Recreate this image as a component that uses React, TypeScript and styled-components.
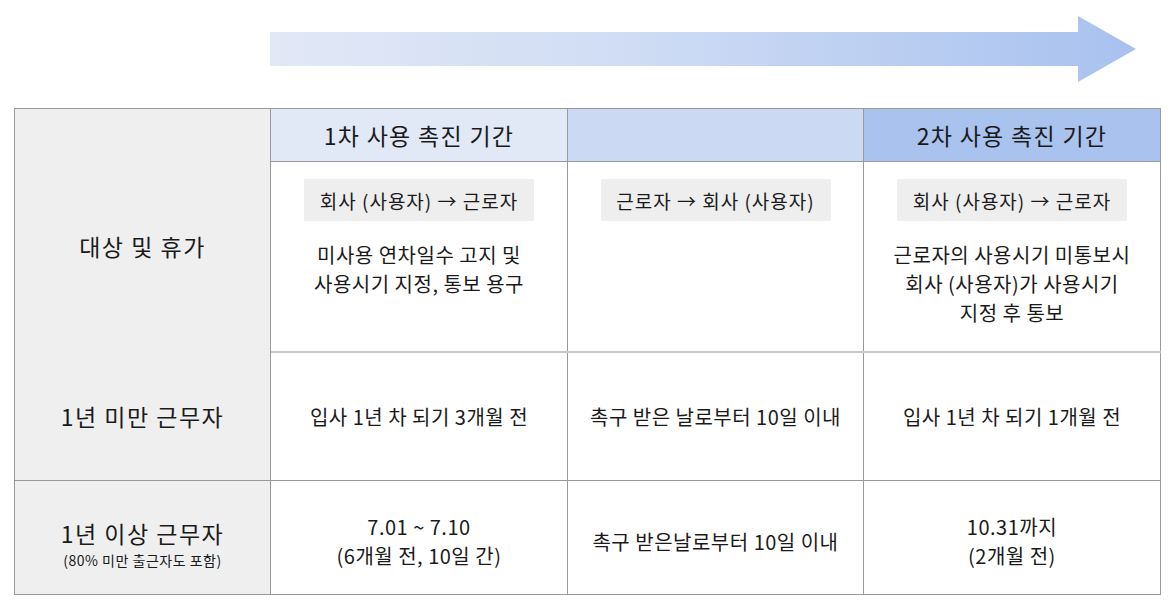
import styled, { createGlobalStyle } from "styled-components";

const GlobalStyle = createGlobalStyle`
  html, body {
    margin: 0;
    padding: 0;
    background: #ffffff;
  }
  body {
    font-family: "Noto Sans CJK KR", "Noto Sans", sans-serif;
    color: #1a1a1a;
  }
`;

const Page = styled.div`
  width: 1173px;
  height: 609px;
  padding-left: 14px;
  box-sizing: border-box;
`;

const ArrowRow = styled.div`
  height: 108px;
  padding-top: 15px;
  padding-left: 256px;
  box-sizing: border-box;
`;

const Table = styled.div`
  display: grid;
  grid-template-columns: 256px 297px 296px 297px;
  grid-template-rows: 53px 189px 2px 128px 114px;
  width: 1147px;
  border-top: 1px solid #9a9a9a;
  border-left: 1px solid #9a9a9a;
  box-sizing: border-box;
`;

const Cell = styled.div<{ $bg?: string }>`
  display: flex;
  flex-direction: column;
  align-items: center;
  justify-content: center;
  text-align: center;
  border-right: 1px solid #9a9a9a;
  border-bottom: 1px solid #9a9a9a;
  background: ${(p) => p.$bg || "#ffffff"};
  box-sizing: border-box;
  font-size: 20px;
  font-weight: 400;
  line-height: 29px;
  letter-spacing: 0.5px;
  white-space: nowrap;
`;

const LabelCell = styled(Cell)<{ $top?: number }>`
  background: #efefef;
  font-size: 23px;
  letter-spacing: 1.5px;
  padding-top: ${(p) => p.$top || 0}px;
`;

const SpanLabel = styled(LabelCell)`
  grid-row: 1 / span 3;
  border-bottom: none;
`;

const HeadCell = styled(Cell)`
  font-size: 23px;
  letter-spacing: 1.3px;
`;

const Divider = styled.div`
  grid-column: 2 / span 3;
  background: #c9c9c9;
`;

const TopCell = styled(Cell)`
  justify-content: flex-start;
  padding-top: 17px;
  border-bottom: none;
`;

const Pill = styled.div`
  width: 230px;
  height: 42px;
  background: #eeeeee;
  display: flex;
  align-items: center;
  justify-content: center;
  font-size: 19px;
  letter-spacing: 1px;
  margin-bottom: 19px;
`;

const Small = styled.div`
  font-size: 14px;
  line-height: 18px;
  letter-spacing: 0.5px;
  margin-top: 5px;
`;

const MainLine = styled.div`
  line-height: 26px;
`;

const LowCell = styled(Cell)`
  padding-top: 7px;
`;

function Arrow() {
  return (
    <svg width="867" height="68" viewBox="0 0 867 68">
      <defs>
        <linearGradient id="arrowFill" x1="0" y1="0" x2="1" y2="0">
          <stop offset="0" stopColor="#e2e8f6" />
          <stop offset="0.4" stopColor="#d0ddf4" />
          <stop offset="1" stopColor="#a8c1ef" />
        </linearGradient>
      </defs>
      <polygon
        points="0,17 808,17 808,1 866,34 808,67 808,51 0,51"
        fill="url(#arrowFill)"
      />
    </svg>
  );
}

export default function App() {
  return (
    <Page>
      <GlobalStyle />
      <ArrowRow>
        <Arrow />
      </ArrowRow>
      <Table>
        <SpanLabel $top={30}>대상 및 휴가</SpanLabel>
        <HeadCell $bg="#e1e8f6">1차 사용 촉진 기간</HeadCell>
        <HeadCell $bg="#cbd9f3" />
        <HeadCell $bg="#a9c2ee">2차 사용 촉진 기간</HeadCell>

        <TopCell>
          <Pill>회사 (사용자) → 근로자</Pill>
          <div>
            미사용 연차일수 고지 및
            <br />
            사용시기 지정, 통보 용구
          </div>
        </TopCell>
        <TopCell>
          <Pill>근로자 → 회사 (사용자)</Pill>
        </TopCell>
        <TopCell>
          <Pill>회사 (사용자) → 근로자</Pill>
          <div>
            근로자의 사용시기 미통보시
            <br />
            회사 (사용자)가 사용시기
            <br />
            지정 후 통보
          </div>
        </TopCell>

        <Divider />

        <LabelCell>1년 미만 근무자</LabelCell>
        <Cell>입사 1년 차 되기 3개월 전</Cell>
        <Cell>촉구 받은 날로부터 10일 이내</Cell>
        <Cell>입사 1년 차 되기 1개월 전</Cell>

        <LabelCell $top={14}>
          <MainLine>1년 이상 근무자</MainLine>
          <Small>(80% 미만 출근자도 포함)</Small>
        </LabelCell>
        <LowCell>
          7.01 ~ 7.10
          <br />
          (6개월 전, 10일 간)
        </LowCell>
        <LowCell>촉구 받은날로부터 10일 이내</LowCell>
        <LowCell>
          10.31까지
          <br />
          (2개월 전)
        </LowCell>
      </Table>
    </Page>
  );
}
